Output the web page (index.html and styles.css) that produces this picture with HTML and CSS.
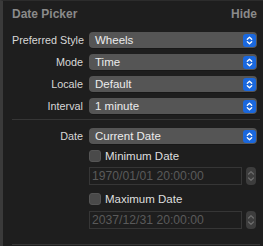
FILE: index.html
```html
<!DOCTYPE html>
<html>
<head>
<meta charset="utf-8">
<link rel="stylesheet" href="styles.css">
</head>
<body>
<div class="panel">
  <div class="header">
    <span class="title">Date Picker</span>
    <span class="hide">Hide</span>
  </div>
  <div class="grid">
    <div class="label">Preferred Style</div>
    <div class="popup"><span>Wheels</span><span class="arrows"><svg width="13" height="13" viewBox="0 0 13 13"><path d="M4.3 5.3 L6.5 3.2 L8.7 5.3 M4.3 7.7 L6.5 9.8 L8.7 7.7" fill="none" stroke="#fff" stroke-width="1.3" stroke-linecap="round" stroke-linejoin="round"/></svg></span></div>
    <div class="label">Mode</div>
    <div class="popup"><span>Time</span><span class="arrows"><svg width="13" height="13" viewBox="0 0 13 13"><path d="M4.3 5.3 L6.5 3.2 L8.7 5.3 M4.3 7.7 L6.5 9.8 L8.7 7.7" fill="none" stroke="#fff" stroke-width="1.3" stroke-linecap="round" stroke-linejoin="round"/></svg></span></div>
    <div class="label">Locale</div>
    <div class="popup"><span>Default</span><span class="arrows"><svg width="13" height="13" viewBox="0 0 13 13"><path d="M4.3 5.3 L6.5 3.2 L8.7 5.3 M4.3 7.7 L6.5 9.8 L8.7 7.7" fill="none" stroke="#fff" stroke-width="1.3" stroke-linecap="round" stroke-linejoin="round"/></svg></span></div>
    <div class="label">Interval</div>
    <div class="popup"><span>1 minute</span><span class="arrows"><svg width="13" height="13" viewBox="0 0 13 13"><path d="M4.3 5.3 L6.5 3.2 L8.7 5.3 M4.3 7.7 L6.5 9.8 L8.7 7.7" fill="none" stroke="#fff" stroke-width="1.3" stroke-linecap="round" stroke-linejoin="round"/></svg></span></div>
  </div>
  <div class="sep sep1"></div>
  <div class="grid grid2">
    <div class="label">Date</div>
    <div class="popup"><span>Current Date</span><span class="arrows"><svg width="13" height="13" viewBox="0 0 13 13"><path d="M4.3 5.3 L6.5 3.2 L8.7 5.3 M4.3 7.7 L6.5 9.8 L8.7 7.7" fill="none" stroke="#fff" stroke-width="1.3" stroke-linecap="round" stroke-linejoin="round"/></svg></span></div>
    <div class="label"></div>
    <div class="datebox">
      <div class="check"><span class="box"></span><span>Minimum Date</span></div>
      <div class="fieldrow">
        <div class="field">1970/01/01 20:00:00</div>
        <div class="stepper"><svg width="10" height="18" viewBox="0 0 10 18"><path d="M2.6 7 L5 4.6 L7.4 7 M2.6 11 L5 13.4 L7.4 11" fill="none" stroke="#6e6e6e" stroke-width="1.2" stroke-linecap="round" stroke-linejoin="round"/></svg></div>
      </div>
      <div class="check check2"><span class="box"></span><span>Maximum Date</span></div>
      <div class="fieldrow fieldrow2">
        <div class="field">2037/12/31 20:00:00</div>
        <div class="stepper"><svg width="10" height="18" viewBox="0 0 10 18"><path d="M2.6 7 L5 4.6 L7.4 7 M2.6 11 L5 13.4 L7.4 11" fill="none" stroke="#6e6e6e" stroke-width="1.2" stroke-linecap="round" stroke-linejoin="round"/></svg></div>
      </div>
    </div>
  </div>
  <div class="sep sep2"></div>
</div>
</body>
</html>
```
FILE: styles.css
```css
html, body {
  margin: 0;
  padding: 0;
  background: #1e1e1e;
}
body {
  width: 263px;
  height: 246px;
  overflow: hidden;
  font-family: "Liberation Sans", Arial, sans-serif;
}
.panel {
  box-sizing: border-box;
  width: 263px;
  height: 246px;
  border-left: 3px solid #3a3a3a;
  border-top: 1px solid #2c2c2c;
  padding-left: 9px;
}
.header {
  display: flex;
  justify-content: space-between;
  align-items: center;
  height: 14px;
  margin-top: 6px;
  padding-right: 6px;
  font-size: 12px;
  font-weight: bold;
  color: #8a8a8a;
  line-height: 14px;
}
.grid {
  display: grid;
  grid-template-columns: 71px 168px;
  column-gap: 6px;
  row-gap: 6px;
  margin-top: 11px;
}
.label {
  font-size: 10.8px;
  color: #d8d8d8;
  text-align: right;
  line-height: 16px;
  height: 16px;
  white-space: nowrap;
}
.popup {
  box-sizing: border-box;
  height: 16px;
  background: #555555;
  border-radius: 4px;
  display: flex;
  align-items: center;
  justify-content: space-between;
  padding-left: 6px;
  padding-right: 1px;
  font-size: 11.5px;
  color: #ececec;
  box-shadow: 0 0.5px 0 rgba(0,0,0,0.4);
}
.arrows {
  width: 13px;
  height: 13px;
  background: #1a68de;
  border-radius: 3px;
  display: flex;
}
.sep {
  height: 1px;
  background: #363636;
  margin-right: 3px;
}
.sep1 {
  margin-top: 5px;
}
.grid2 {
  margin-top: 8px;
}
.datebox {
  display: flex;
  flex-direction: column;
}
.check {
  display: flex;
  align-items: center;
  height: 12px;
  font-size: 11.5px;
  color: #dedede;
}
.box {
  box-sizing: border-box;
  width: 12px;
  height: 12px;
  background: #4a4a4a;
  border: 1px solid #555;
  border-radius: 3px;
  margin-right: 4px;
  flex: none;
}
.check2 {
  margin-top: 8px;
}
.fieldrow {
  display: flex;
  margin-top: 5px;
  gap: 4px;
}
.fieldrow2 {
  margin-top: 6px;
}
.field {
  box-sizing: border-box;
  width: 153px;
  height: 18px;
  border: 1px solid #363636;
  padding-left: 2px;
  font-size: 12.2px;
  line-height: 16px;
  color: #5a5a5a;
  white-space: nowrap;
  overflow: hidden;
}
.stepper {
  width: 10px;
  height: 18px;
  background: #3d3d3d;
  border-radius: 4px;
  display: flex;
}
.sep2 {
  margin-top: 15px;
}
```
